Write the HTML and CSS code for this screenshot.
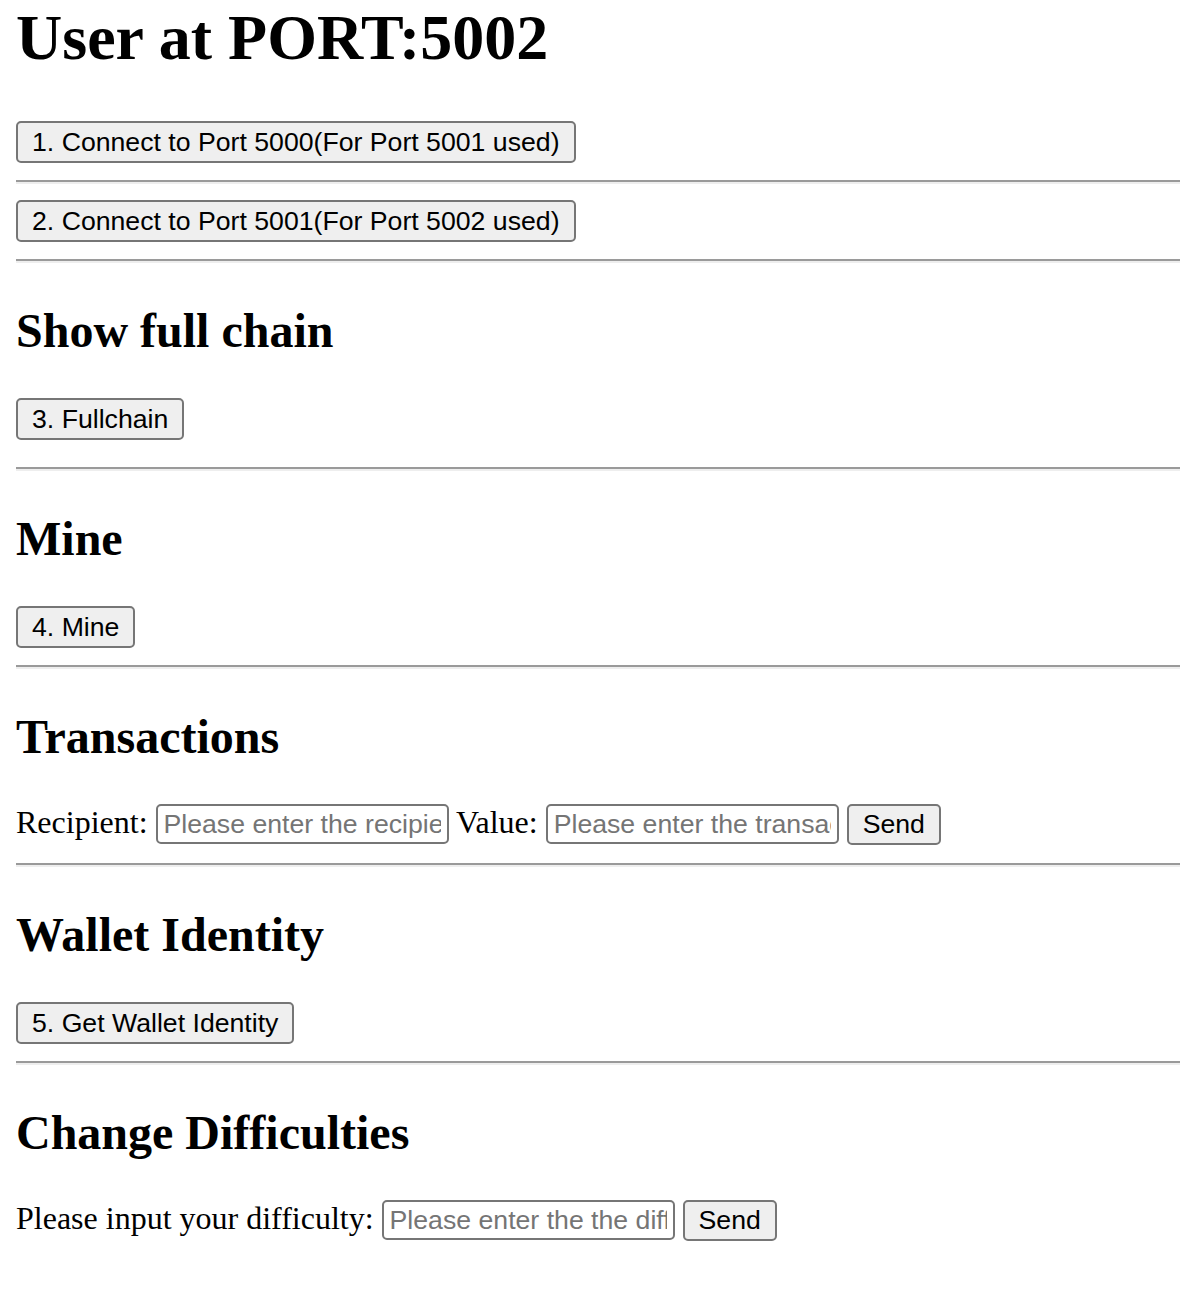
FILE: index.html
```html
<!DOCTYPE html>
<html>
<head>
<meta charset="utf-8">
<title>User</title>
<link rel="stylesheet" href="styles.css">
</head>
<body>
<h1 class="title">User at PORT:5002</h1>
<div class="row"><button class="btn">1. Connect to Port 5000(For Port 5001 used)</button></div>
<hr class="rule">
<div class="row"><button class="btn">2. Connect to Port 5001(For Port 5002 used)</button></div>
<hr class="rule">
<h2 class="section">Show full chain</h2>
<div class="row row-extra"><button class="btn">3. Fullchain</button></div>
<hr class="rule">
<h2 class="section">Mine</h2>
<div class="row"><button class="btn">4. Mine</button></div>
<hr class="rule">
<h2 class="section">Transactions</h2>
<div class="row">Recipient: <input class="field" placeholder="Please enter the recipient"> Value: <input class="field" placeholder="Please enter the transaction value"> <button class="btn btn-send">Send</button></div>
<hr class="rule">
<h2 class="section">Wallet Identity</h2>
<div class="row"><button class="btn">5. Get Wallet Identity</button></div>
<hr class="rule">
<h2 class="section">Change Difficulties</h2>
<div class="row">Please input your difficulty: <input class="field" placeholder="Please enter the the difficulty"> <button class="btn btn-send">Send</button></div>
</body>
</html>
```
FILE: styles.css
```css
html, body {
  margin: 0;
  padding: 0;
  background: #fff;
}
body {
  padding: 0 0 16px 16px;
  font-family: "Liberation Serif", "Times New Roman", serif;
  font-size: 32px;
  color: #000;
}
.title {
  font-size: 64px;
  font-weight: bold;
  margin: 0 0 47px 0;
  line-height: 73.5px;
  position: relative;
  top: 1px;
}
.section {
  font-size: 48px;
  font-weight: bold;
  margin: 40px 0;
  line-height: 55px;
}
.row {
  margin: 0;
  height: 43px;
}
.row-extra {
  padding-bottom: 10px;
}
.btn {
  box-sizing: border-box;
  height: 42px;
  font-family: "Liberation Sans", Arial, sans-serif;
  font-size: 26.67px;
  line-height: 30px;
  color: #000;
  background: #efefef;
  border: 2px solid #767676;
  border-radius: 5px;
  padding: 4px 14px;
  margin: 0;
}
.btn-send {
  height: 41px;
  padding: 3px 14px 4px;
}
.field {
  box-sizing: border-box;
  font-family: "Liberation Sans", Arial, sans-serif;
  font-size: 26.67px;
  line-height: 30px;
  color: #000;
  background: #fff;
  border: 2px solid #767676;
  border-radius: 5px;
  padding: 3px 6px;
  width: 293px;
  height: 40px;
  margin: 0;
}
.field::placeholder {
  color: #757575;
}
.rule {
  margin: 16px 0;
  border: 0;
  border-top: 2px solid #9a9a9a;
  border-bottom: 2px solid #eeeeee;
  height: 0;
}
```
